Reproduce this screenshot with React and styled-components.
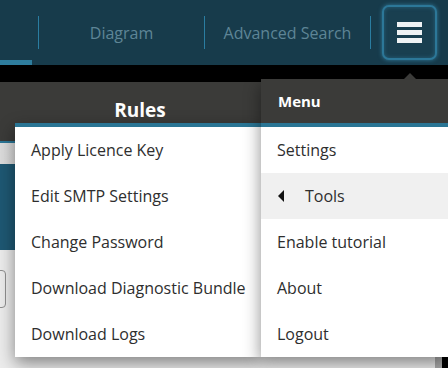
import styled, { createGlobalStyle } from "styled-components";

const GlobalStyle = createGlobalStyle`
  html, body {
    margin: 0;
    padding: 0;
    width: 448px;
    height: 368px;
    overflow: hidden;
    background: #e6e6e6;
    font-family: "Open Sans", "Noto Sans", "Liberation Sans", sans-serif;
  }
`;

const toolsItems = [
  "Apply Licence Key",
  "Edit SMTP Settings",
  "Change Password",
  "Download Diagnostic Bundle",
  "Download Logs",
];

const menuItems = [
  { label: "Settings" },
  { label: "Tools", sub: true, active: true },
  { label: "Enable tutorial" },
  { label: "About" },
  { label: "Logout" },
];

const App = () => {
  return (
    <Page>
      <GlobalStyle />
      <Navbar>
        <Tab active />
        <Divider />
        <Tab>Diagram</Tab>
        <Divider />
        <Tab>Advanced Search</Tab>
        <Divider />
        <MenuSlot>
          <Burger>
            <span />
            <span />
            <span />
          </Burger>
        </MenuSlot>
      </Navbar>
      <Gap />
      <RulesHeader>Rules</RulesHeader>
      <Toolbar />
      <TealBlock />
      <Content>
        <GhostButton />
        <EdgeBar />
      </Content>

      <ToolsMenu>
        <List>
          {toolsItems.map((t) => (
            <Item key={t}>{t}</Item>
          ))}
        </List>
      </ToolsMenu>

      <MainMenu>
        <Caret />
        <MenuHeader>Menu</MenuHeader>
        <List>
          {menuItems.map((m) => (
            <Item key={m.label} active={m.active}>
              {m.sub && <Arrow />}
              {m.label}
            </Item>
          ))}
        </List>
      </MainMenu>
    </Page>
  );
};

export default App;

const Page = styled.div`
  position: relative;
  width: 448px;
  height: 368px;
  overflow: hidden;
  display: flex;
  flex-direction: column;
`;

const Navbar = styled.div`
  height: 65px;
  background: #173b4b;
  display: flex;
  align-items: center;
  flex-shrink: 0;
`;

const Tab = styled.div`
  height: 100%;
  box-sizing: border-box;
  display: flex;
  align-items: center;
  justify-content: center;
  width: ${(p) => (p.active ? "32px" : "165px")};
  margin-right: ${(p) => (p.active ? "6px" : "0")};
  border-bottom: ${(p) => (p.active ? "5px solid #2e7d9d" : "none")};
  color: #5e8596;
  font-size: 16px;
  padding-top: 1px;
`;

const Divider = styled.div`
  width: 1px;
  height: 33px;
  background: #2a7da1;
`;

const MenuSlot = styled.div`
  flex: 1;
  display: flex;
  justify-content: flex-end;
  padding-right: 11px;
`;

const Burger = styled.div`
  width: 55px;
  height: 55px;
  box-sizing: border-box;
  border: 2px solid #2c7798;
  border-radius: 7px;
  background: #193f50;
  box-shadow: 0 0 4px rgba(60, 150, 190, 0.7), inset 0 0 4px rgba(60, 150, 190, 0.4);
  display: flex;
  flex-direction: column;
  align-items: center;
  justify-content: center;
  gap: 3px;

  span {
    width: 25px;
    height: 5px;
    background: #eef2f4;
  }
`;

const Gap = styled.div`
  height: 17px;
  background: #000;
  flex-shrink: 0;
`;

const RulesHeader = styled.div`
  height: 61px;
  box-sizing: border-box;
  padding-top: 15px;
  padding-right: 168px;
  background: #3b3b39;
  border-bottom: 2px solid #2b7696;
  color: #fff;
  font-size: 19px;
  font-weight: 700;
  text-align: center;
  flex-shrink: 0;
`;

const Toolbar = styled.div`
  height: 21px;
  background: linear-gradient(90deg, #dcdcdc, #c4c4c4);
  flex-shrink: 0;
`;

const TealBlock = styled.div`
  height: 86px;
  background: #1e5873;
  flex-shrink: 0;
`;

const Content = styled.div`
  flex: 1;
  background: #ececec;
  display: flex;
  align-items: flex-start;
  justify-content: space-between;
  padding-top: 20px;
`;

const GhostButton = styled.div`
  width: 60px;
  height: 36px;
  margin-left: -56px;
  border: 1px solid #8f8f8f;
  border-radius: 4px;
`;

const EdgeBar = styled.div`
  align-self: stretch;
  margin-top: -20px;
  width: 6px;
  border-left: 7px solid #a9a9a9;
  margin-left: 2px;
  background: #000;
  box-sizing: content-box;
`;

const Dropdown = styled.div`
  position: absolute;
  background: #fff;
  box-shadow: 0 6px 16px rgba(0, 0, 0, 0.45);
`;

const ToolsMenu = styled(Dropdown)`
  left: 15px;
  top: 123px;
  width: 246px;
`;

const MainMenu = styled(Dropdown)`
  left: 261px;
  top: 79px;
  width: 187px;
`;

const Caret = styled.div`
  position: absolute;
  top: -6px;
  left: 143px;
  width: 0;
  height: 0;
  border-left: 6px solid transparent;
  border-right: 6px solid transparent;
  border-bottom: 6px solid #3b3b39;
`;

const MenuHeader = styled.div`
  height: 44px;
  background: #3b3b39;
  color: #fff;
  font-size: 15px;
  font-weight: 700;
  display: flex;
  align-items: center;
  padding-left: 17px;
`;

const List = styled.div`
  border-top: 4px solid #2a7594;
  display: flex;
  flex-direction: column;
`;

const Item = styled.div`
  height: 46px;
  display: flex;
  align-items: center;
  padding-left: 16px;
  font-size: 16px;
  color: #2e2e2e;
  background: ${(p) => (p.active ? "#f0f0f0" : "#fff")};
  white-space: nowrap;
`;

const Arrow = styled.span`
  width: 0;
  height: 0;
  border-top: 6px solid transparent;
  border-bottom: 6px solid transparent;
  border-right: 6px solid #111;
  margin-left: 1px;
  margin-right: 21px;
`;
